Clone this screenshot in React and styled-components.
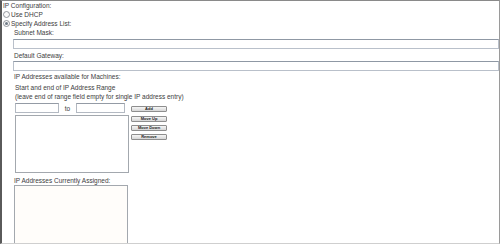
import React from "react";
import styled, { createGlobalStyle } from "styled-components";

const Global = createGlobalStyle`
  html, body {
    margin: 0;
    padding: 0;
    background: #ffffff;
  }
`;

export default function App() {
  return (
    <>
      <Global />
      <Panel>
        <Heading>IP Configuration:</Heading>
        <RadioRow>
          <Radio />
          Use DHCP
        </RadioRow>
        <RadioRow>
          <Radio checked />
          Specify Address List:
        </RadioRow>

        <Section>
          <Label>Subnet Mask:</Label>
          <WideInput $top={2} />
          <Label $top={2}>Default Gateway:</Label>
          <WideInput $top={1} />

          <Label $top={1}>IP Addresses available for Machines:</Label>
          <Range>
            <Label $top={2}>Start and end of IP Address Range</Label>
            <Label>(leave end of range field empty for single IP address entry)</Label>
            <RangeGrid>
              <InputsRow>
                <SmallInput $width={42} />
                <To>to</To>
                <SmallInput $width={47} />
              </InputsRow>
              <ButtonCell>
                <SmallButton>Add</SmallButton>
              </ButtonCell>
              <ListBox $height={56} />
              <ButtonStack>
                <SmallButton>Move Up</SmallButton>
                <SmallButton>Move Down</SmallButton>
                <SmallButton>Remove</SmallButton>
              </ButtonStack>
            </RangeGrid>
          </Range>

          <Label $top={3}>IP Addresses Currently Assigned:</Label>
          <AssignedBox />
        </Section>
      </Panel>
    </>
  );
}

function Radio({ checked }) {
  return (
    <RadioSvg width="7" height="7" viewBox="0 0 7 7">
      <circle cx="3.5" cy="3.5" r="3" fill="#fafafa" stroke="#7a7f86" strokeWidth="0.8" />
      {checked && <circle cx="3.5" cy="3.5" r="1.5" fill="#6f7a86" />}
    </RadioSvg>
  );
}

const Panel = styled.div`
  width: 500px;
  height: 244px;
  box-sizing: border-box;
  overflow: hidden;
  border-left: 2px solid #5a5a5a;
  border-top: 1px solid #8a8a8a;
  border-right: 1px solid #9a9a9a;
  border-bottom: 1px solid #cfcfcf;
  padding-left: 1px;
  font-family: "Liberation Sans", Arial, sans-serif;
  font-size: 6.5px;
  color: #3d3d3d;
  display: flex;
  flex-direction: column;
`;

const Heading = styled.div`
  line-height: 9px;
  height: 9px;
`;

const RadioRow = styled.div`
  display: flex;
  align-items: center;
  gap: 1px;
  line-height: 9px;
  height: 9px;
`;

const RadioSvg = styled.svg`
  display: block;
  flex: none;
`;

const Section = styled.div`
  display: flex;
  flex-direction: column;
  padding-left: 10px;
`;

const Label = styled.div`
  line-height: 9px;
  height: 9px;
  margin-top: ${(p) => p.$top || 0}px;
  padding-left: 1px;
  white-space: nowrap;
`;

const WideInput = styled.div`
  height: 8px;
  margin-top: ${(p) => p.$top}px;
  border: 1px solid #b9c0ca;
  border-top-color: #8f98a4;
  background: #ffffff;
`;

const Range = styled.div`
  display: flex;
  flex-direction: column;
  padding-left: 1px;
`;

const RangeGrid = styled.div`
  display: grid;
  grid-template-columns: 114px 36px;
  column-gap: 2px;
  row-gap: 2px;
  margin-top: 2px;
  margin-left: 1px;
`;

const InputsRow = styled.div`
  display: flex;
  align-items: center;
`;

const SmallInput = styled.div`
  width: ${(p) => p.$width}px;
  height: 8px;
  border: 1px solid #b3b9c2;
  border-top-color: #949ba5;
  background: #ffffff;
`;

const To = styled.span`
  width: 17px;
  text-align: center;
  line-height: 9px;
`;

const ButtonCell = styled.div`
  display: flex;
  align-items: center;
  padding-top: 1px;
`;

const ButtonStack = styled.div`
  display: flex;
  flex-direction: column;
  gap: 3px;
  margin-top: 1px;
`;

const SmallButton = styled.div`
  width: 34px;
  height: 4px;
  border: 1px solid #8e8e8e;
  border-radius: 1px;
  background: linear-gradient(#f6f6f6, #d6d6d6);
  font-size: 4px;
  font-weight: bold;
  line-height: 4px;
  text-align: center;
  color: #222;
  white-space: nowrap;
`;

const ListBox = styled.div`
  height: ${(p) => p.$height}px;
  border: 1px solid #a3a8ae;
  background: #ffffff;
`;

const AssignedBox = styled.div`
  width: 112px;
  height: 60px;
  margin-left: 1px;
  border: 1px solid #a3a8ae;
  background: #fffdfa;
`;
